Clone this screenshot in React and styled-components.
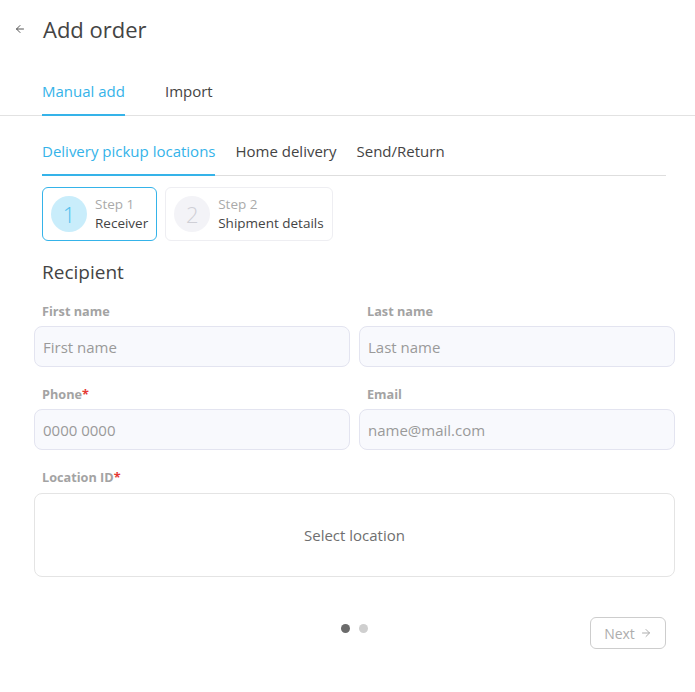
import React from 'react';
import styled, { createGlobalStyle } from 'styled-components';
import { ArrowLeft, ArrowRight } from 'lucide-react';

const GlobalStyle = createGlobalStyle`
  body {
    margin: 0;
    background: #fff;
    font-family: "Open Sans", "Liberation Sans", sans-serif;
    color: #444;
  }
`;

const BLUE = '#35b3e9';

const Page = styled.div`
  width: 695px;
`;

const Header = styled.header`
  display: flex;
  align-items: center;
  height: 58px;
  padding-left: 14px;
  color: #555;
`;

const Title = styled.h1`
  margin: 0 0 0 17px;
  font-size: 22px;
  font-weight: 400;
  color: #444;
`;

const TopTabs = styled.nav`
  display: flex;
  gap: 40px;
  padding: 23px 42px 0;
  border-bottom: 1px solid #e2e2e2;
`;

const Tab = styled.div`
  font-size: 15px;
  line-height: 20px;
  padding-bottom: 13px;
  margin-bottom: -1px;
  color: ${p => (p.$active ? BLUE : '#444')};
  border-bottom: 2px solid ${p => (p.$active ? BLUE : 'transparent')};
`;

const Content = styled.main`
  padding: 0 20px 0 34px;
`;

const SubTabs = styled.nav`
  display: flex;
  gap: 20px;
  margin: 25px 9px 0 8px;
  border-bottom: 1px solid #dedede;
`;

const Steps = styled.div`
  display: flex;
  gap: 8px;
  margin: 11px 0 0 8px;
`;

const StepCard = styled.div`
  display: flex;
  align-items: center;
  gap: 8px;
  height: 54px;
  box-sizing: border-box;
  padding: 0 8px;
  border-radius: 6px;
  border: 1px solid ${p => (p.$active ? BLUE : '#eeeef2')};
`;

const StepCircle = styled.div`
  width: 36px;
  height: 36px;
  border-radius: 50%;
  display: flex;
  align-items: center;
  justify-content: center;
  font-size: 22px;
  font-weight: 300;
  background: ${p => (p.$active ? '#c9edfb' : '#f3f3f7')};
  color: ${p => (p.$active ? '#4fbfee' : '#cfcfd6')};
`;

const StepText = styled.div`
  display: flex;
  flex-direction: column;
  font-size: 13.5px;
  line-height: 19px;
  color: #444;
  span:first-child {
    color: #aaa;
  }
`;

const SectionTitle = styled.h2`
  margin: 19px 0 0 8px;
  font-size: 19px;
  line-height: 24px;
  font-weight: 400;
  color: #444;
`;

const FieldGrid = styled.div`
  display: grid;
  grid-template-columns: 1fr 1fr;
  column-gap: 9px;
  row-gap: 19px;
  margin-top: 19px;
`;

const Field = styled.div`
  display: flex;
  flex-direction: column;
  gap: 7px;
  grid-column: ${p => (p.$wide ? '1 / -1' : 'auto')};
`;

const Label = styled.label`
  padding-left: 8px;
  font-size: 12.7px;
  line-height: 16px;
  font-weight: 700;
  color: #a3a3a3;
  em {
    font-style: normal;
    color: #e53935;
  }
`;

const Input = styled.input`
  box-sizing: border-box;
  height: 41px;
  width: 100%;
  padding: 0 8px;
  border: 1px solid #e3e4f0;
  border-radius: 8px;
  background: #f8f9fd;
  font-family: inherit;
  font-size: 15px;
  color: #444;
  outline: none;
  &::placeholder {
    color: #9a9a9a;
  }
`;

const LocationBox = styled.div`
  box-sizing: border-box;
  height: 84px;
  margin-top: 1px;
  display: flex;
  align-items: center;
  justify-content: center;
  border: 1px solid #e4e4e4;
  border-radius: 8px;
  font-size: 15px;
  color: #6f6f6f;
`;

const Footer = styled.div`
  display: grid;
  grid-template-columns: 1fr auto 1fr;
  align-items: start;
  margin-top: 40px;
`;

const Dots = styled.div`
  display: flex;
  gap: 9px;
  margin-top: 7px;
`;

const Dot = styled.span`
  width: 9px;
  height: 9px;
  border-radius: 50%;
  background: ${p => (p.$active ? '#6b6b6b' : '#cfcfcf')};
`;

const NextButton = styled.button`
  justify-self: end;
  margin-right: 9px;
  display: flex;
  align-items: center;
  gap: 5px;
  height: 32px;
  width: 76px;
  justify-content: center;
  border: 1px solid #cdcdcd;
  border-radius: 6px;
  background: #fff;
  font-family: inherit;
  font-size: 14px;
  color: #adadad;
`;

const fields = [
  { label: 'First name', placeholder: 'First name' },
  { label: 'Last name', placeholder: 'Last name' },
  { label: 'Phone', placeholder: '0000 0000', required: true },
  { label: 'Email', placeholder: 'name@mail.com' },
];

export default function App() {
  return (
    <Page>
      <GlobalStyle />
      <Header>
        <ArrowLeft size={12} strokeWidth={2} />
        <Title>Add order</Title>
      </Header>
      <TopTabs>
        <Tab $active>Manual add</Tab>
        <Tab>Import</Tab>
      </TopTabs>
      <Content>
        <SubTabs>
          <Tab $active>Delivery pickup locations</Tab>
          <Tab>Home delivery</Tab>
          <Tab>Send/Return</Tab>
        </SubTabs>
        <Steps>
          <StepCard $active>
            <StepCircle $active>1</StepCircle>
            <StepText>
              <span>Step 1</span>
              <span>Receiver</span>
            </StepText>
          </StepCard>
          <StepCard>
            <StepCircle>2</StepCircle>
            <StepText>
              <span>Step 2</span>
              <span>Shipment details</span>
            </StepText>
          </StepCard>
        </Steps>
        <SectionTitle>Recipient</SectionTitle>
        <FieldGrid>
          {fields.map(f => (
            <Field key={f.label}>
              <Label>
                {f.label}
                {f.required && <em>*</em>}
              </Label>
              <Input placeholder={f.placeholder} />
            </Field>
          ))}
          <Field $wide>
            <Label>
              Location ID<em>*</em>
            </Label>
            <LocationBox>Select location</LocationBox>
          </Field>
        </FieldGrid>
        <Footer>
          <span />
          <Dots>
            <Dot $active />
            <Dot />
          </Dots>
          <NextButton>
            Next <ArrowRight size={12} strokeWidth={2} />
          </NextButton>
        </Footer>
      </Content>
    </Page>
  );
}
